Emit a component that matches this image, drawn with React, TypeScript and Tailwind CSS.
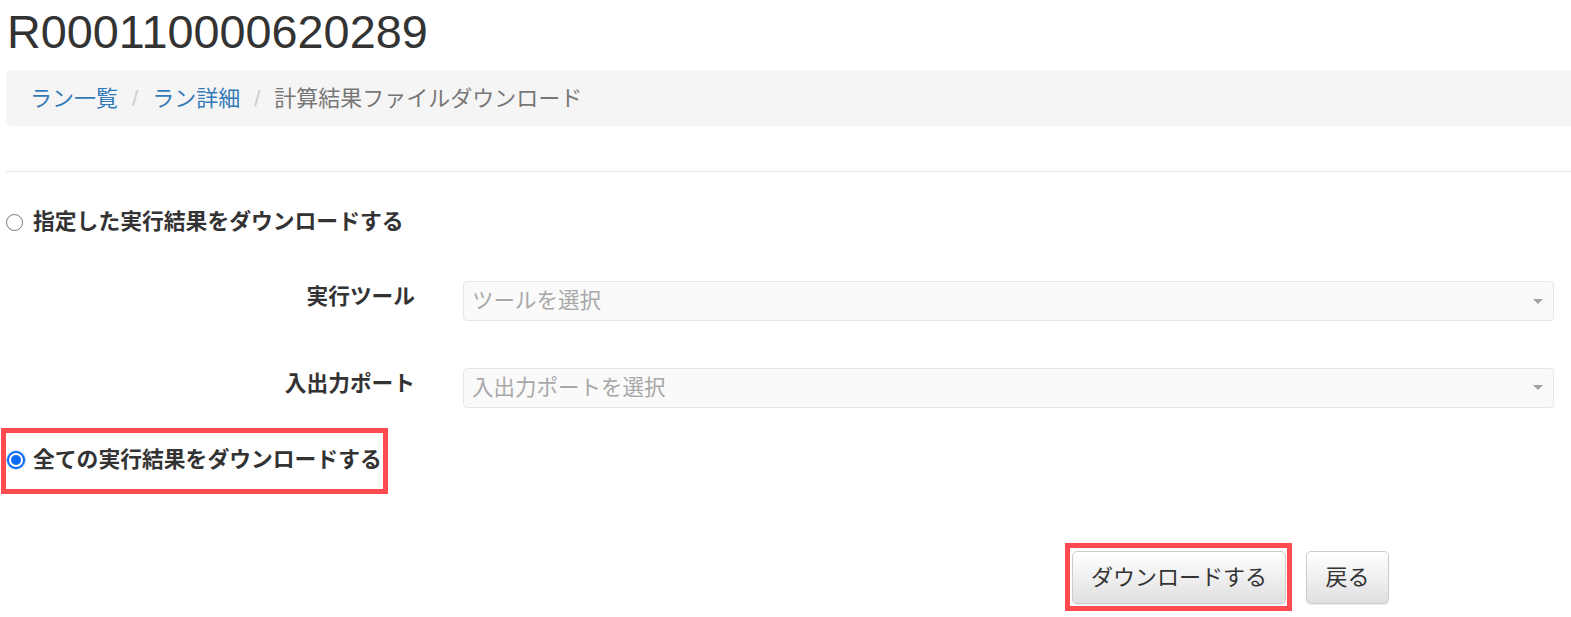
import React from 'react';

const font = { fontFamily: '"Liberation Sans", "Noto Sans CJK JP", sans-serif' };

const crumbs = ['ラン一覧', 'ラン詳細'];

const Radio = ({ checked }: { checked: boolean }) =>
    checked ? (
        <span className="flex h-[18px] w-[18px] items-center justify-center rounded-full border-[2px] border-[#0b6cf0] bg-white shadow-[0_0_0_1px_#b8d4fb]">
            <span className="h-[10px] w-[10px] rounded-full bg-[#0b6cf0]" />
        </span>
    ) : (
        <span className="block h-[17px] w-[17px] rounded-full border-[1.5px] border-[#767676] bg-white" />
    );

const SelectBox = ({ placeholder }: { placeholder: string }) => (
    <div className="flex h-[40px] flex-1 items-center justify-between rounded-[4px] border border-[#e6e6e6] bg-[#fafafa] pl-[8px] pr-[10px]">
        <span className="text-[21.5px] text-[#a8a8a8]">{placeholder}</span>
        <span className="h-0 w-0 border-x-[5px] border-t-[5px] border-x-transparent border-t-[#a0a0a0]" />
    </div>
);

const FieldRow = ({ label, placeholder, className }: { label: string; placeholder: string; className: string }) => (
    <div className={`flex items-center ${className}`}>
        <label className="w-[409px] pb-[8px] text-right text-[21.7px] font-bold text-[#333]">{label}</label>
        <div className="ml-[48px] mr-[17px] flex flex-1">
            <SelectBox placeholder={placeholder} />
        </div>
    </div>
);

const btn =
    'flex h-[53px] items-center justify-center rounded-[5px] border border-[#ccc] bg-gradient-to-b from-white to-[#e0e0e0] text-[22px] text-[#333] shadow-[inset_0_1px_0_rgba(255,255,255,0.15),0_1px_1px_rgba(0,0,0,0.075)]';

export default function App() {
    return (
        <div style={font} className="h-[617px] w-[1571px] overflow-hidden bg-white pl-[6px] text-[#333]">
            <h1 className="mt-[7px] mb-[13px] pl-[1px] text-[46.8px] leading-[50px] font-normal">R000110000620289</h1>

            <ol className="-mr-[10px] flex h-[56px] items-center rounded-[6px] bg-[#f5f5f5] pl-[24px] text-[22px]">
                {crumbs.map((c) => (
                    <li key={c} className="flex items-center">
                        <span className="text-[#337ab7]">{c}</span>
                        <span className="px-[14px] text-[#ccc]">/</span>
                    </li>
                ))}
                <li className="text-[#777]">計算結果ファイルダウンロード</li>
            </ol>

            <hr className="mt-[45px] border-0 border-t border-[#e8e8e8]" />

            <label className="mt-[35px] flex h-[30px] items-center">
                <Radio checked={false} />
                <span className="ml-[10px] text-[21.8px] font-bold">指定した実行結果をダウンロードする</span>
            </label>

            <FieldRow label="実行ツール" placeholder="ツールを選択" className="mt-[44px]" />
            <FieldRow label="入出力ポート" placeholder="入出力ポートを選択" className="mt-[46px]" />

            <div className="-ml-[5px] mt-[20px] flex h-[66px] w-[387px] items-center border-[5px] border-[#ff4b4f] pb-[2px]">
                <span className="ml-[1px]">
                    <Radio checked={true} />
                </span>
                <span className="ml-[8px] text-[21.8px] font-bold">全ての実行結果をダウンロードする</span>
            </div>

            <div className="ml-[1059px] mt-[49px] flex items-start">
                <div className="border-[5px] border-[#ff4b4f] pt-[3px] pb-[2px] pl-[2px] pr-[1px]">
                    <button className={`${btn} w-[214px]`}>ダウンロードする</button>
                </div>
                <button className={`${btn} ml-[14px] mt-[8px] w-[83px]`}>戻る</button>
            </div>
        </div>
    );
}
